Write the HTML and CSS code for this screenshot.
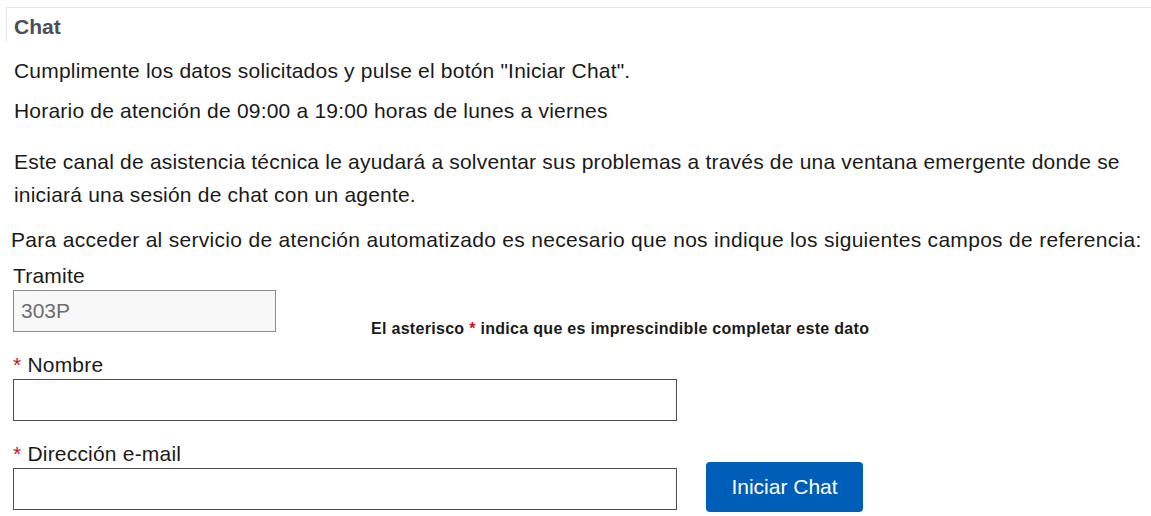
FILE: index.html
```html
<!DOCTYPE html>
<html lang="es">
<head>
    <meta charset="UTF-8">
    <title>Chat</title>
    <link rel="stylesheet" href="styles.css">
</head>
<body>
    <div class="panel-head">
        <h2>Chat</h2>
    </div>

    <div class="content">
        <p class="intro">Cumplimente los datos solicitados y pulse el botón "Iniciar Chat".</p>
        <p class="intro second">Horario de atención de 09:00 a 19:00 horas de lunes a viernes</p>
        <p class="info">Este canal de asistencia técnica le ayudará a solventar sus problemas a través de una ventana emergente donde se iniciará una sesión de chat con un agente.</p>
        <p class="lead">Para acceder al servicio de atención automatizado es necesario que nos indique los siguientes campos de referencia:</p>

        <form class="chat-form">
            <div class="row">
                <div class="field">
                    <label for="tramite">Tramite</label>
                    <input type="text" id="tramite" class="small" placeholder="303P" disabled>
                </div>
                <p class="note">El asterisco <span class="req">*</span> indica que es imprescindible completar este dato</p>
            </div>

            <div class="field">
                <label for="nombre"><span class="req">*</span> Nombre</label>
                <input type="text" id="nombre">
            </div>

            <div class="row bottom">
                <div class="field">
                    <label for="email"><span class="req">*</span> Dirección e-mail</label>
                    <input type="email" id="email">
                </div>
                <button type="button" class="start-btn">Iniciar Chat</button>
            </div>
        </form>
    </div>
</body>
</html>
```

FILE: styles.css
```css
/* General */
body {
    font-family: "Liberation Sans", Arial, sans-serif;
    color: #1a1a1a;
    background-color: #fff;
    margin: 0;
}

p {
    margin: 0;
}

/* Panel heading */
.panel-head {
    margin: 7px 0 0 6px;
    border-top: 1px solid #e2e7eb;
    border-left: 1px solid #e2e7eb;
    height: 33px;
    padding-left: 7px;
}

.panel-head h2 {
    margin: 0;
    font-size: 21px;
    line-height: 38px;
    color: #4a4f55;
    font-weight: bold;
}

/* Content */
.content {
    padding: 0 14px;
    font-size: 21px;
    letter-spacing: 0.2px;
}

.intro {
    line-height: 24px;
    margin-top: 18px;
}

.intro.second {
    margin-top: 16px;
}

.info {
    margin-top: 22px;
    line-height: 33px;
}

.lead {
    margin: 17px -14px 0 -3px;
    line-height: 24px;
    letter-spacing: 0.3px;
    white-space: nowrap;
}

/* Form */
.chat-form {
    margin-top: 12px;
}

.row {
    display: flex;
    align-items: flex-end;
}

.field {
    display: flex;
    flex-direction: column;
    margin-bottom: 21px;
}

.field label {
    line-height: 24px;
    margin-bottom: 2px;
    margin-left: -1px;
}

.field input {
    width: 664px;
    height: 42px;
    box-sizing: border-box;
    margin: 0 0 0 -1px;
    border: 1px solid #4a4f55;
    font-family: inherit;
    font-size: 21px;
    padding: 0 7px;
}

.field input.small {
    width: 263px;
    background-color: #f8f8f8;
    border-color: #8a8d90;
}

.field input.small::placeholder {
    color: #6e6e6e;
}

.req {
    color: #c8102e;
}

.note {
    font-size: 16px;
    font-weight: bold;
    letter-spacing: 0.3px;
    margin: 0 0 14px 95px;
    line-height: 20px;
}

.bottom .field {
    margin-bottom: 2px;
}

.start-btn {
    margin-left: 29px;
    width: 157px;
    height: 50px;
    border: none;
    border-radius: 4px;
    background-color: #005eb8;
    color: #fff;
    font-family: inherit;
    font-size: 21px;
    cursor: pointer;
}
```
